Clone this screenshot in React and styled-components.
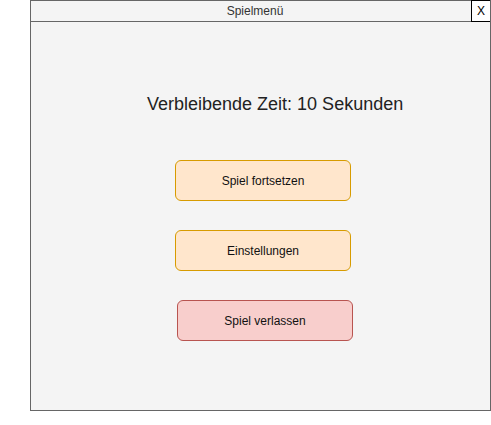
import React from "react";
import styled, { createGlobalStyle } from "styled-components";

const GlobalStyle = createGlobalStyle`
  html, body {
    margin: 0;
    padding: 0;
    background: #ffffff;
  }
  body {
    font-family: "Liberation Sans", Arial, sans-serif;
  }
`;

const buttons = [
  { label: "Spiel fortsetzen", variant: "orange", offset: 144 },
  { label: "Einstellungen", variant: "orange", offset: 144 },
  { label: "Spiel verlassen", variant: "red", offset: 146 },
];

const palette = {
  orange: { fill: "#ffe6cc", stroke: "#d79b00" },
  red: { fill: "#f8cecc", stroke: "#b85450" },
};

const App = () => {
  return (
    <>
      <GlobalStyle />
      <Window>
        <TitleBar>
          <TitleText>Spielmenü</TitleText>
          <CloseBox>X</CloseBox>
        </TitleBar>
        <Content>
          <Countdown>Verbleibende Zeit: 10 Sekunden</Countdown>
          <ButtonList>
            {buttons.map((b) => (
              <MenuButton key={b.label} $variant={b.variant} $offset={b.offset}>
                {b.label}
              </MenuButton>
            ))}
          </ButtonList>
        </Content>
      </Window>
    </>
  );
};
export default App;

const Window = styled.div`
  box-sizing: border-box;
  margin-left: 30px;
  width: 461px;
  height: 411px;
  border: 1px solid #666666;
  background: #f4f4f4;
  display: flex;
  flex-direction: column;
`;

const TitleBar = styled.div`
  display: flex;
  align-items: stretch;
  height: 20px;
  border-bottom: 1px solid #666666;
`;

const TitleText = styled.div`
  flex: 1;
  text-align: center;
  font-size: 12px;
  line-height: 20px;
  color: #333333;
  padding-left: 8px;
`;

const CloseBox = styled.div`
  box-sizing: border-box;
  width: 19px;
  margin-top: -1px;
  height: 22px;
  border: 1px solid #000000;
  border-right: none;
  background: #ffffff;
  text-align: center;
  font-size: 12px;
  line-height: 20px;
  color: #000000;
`;

const Content = styled.div`
  display: flex;
  flex-direction: column;
  padding-top: 72px;
`;

const Countdown = styled.div`
  margin-left: 116px;
  font-size: 18px;
  line-height: 20px;
  color: #222222;
`;

const ButtonList = styled.div`
  display: flex;
  flex-direction: column;
  gap: 29px;
  margin-top: 46px;
`;

const MenuButton = styled.div`
  box-sizing: border-box;
  width: 176px;
  height: 41px;
  margin-left: ${(p) => p.$offset}px;
  border: 1px solid ${(p) => palette[p.$variant].stroke};
  border-radius: 6px;
  background: ${(p) => palette[p.$variant].fill};
  display: flex;
  align-items: center;
  justify-content: center;
  font-size: 12px;
  color: #111111;
`;
